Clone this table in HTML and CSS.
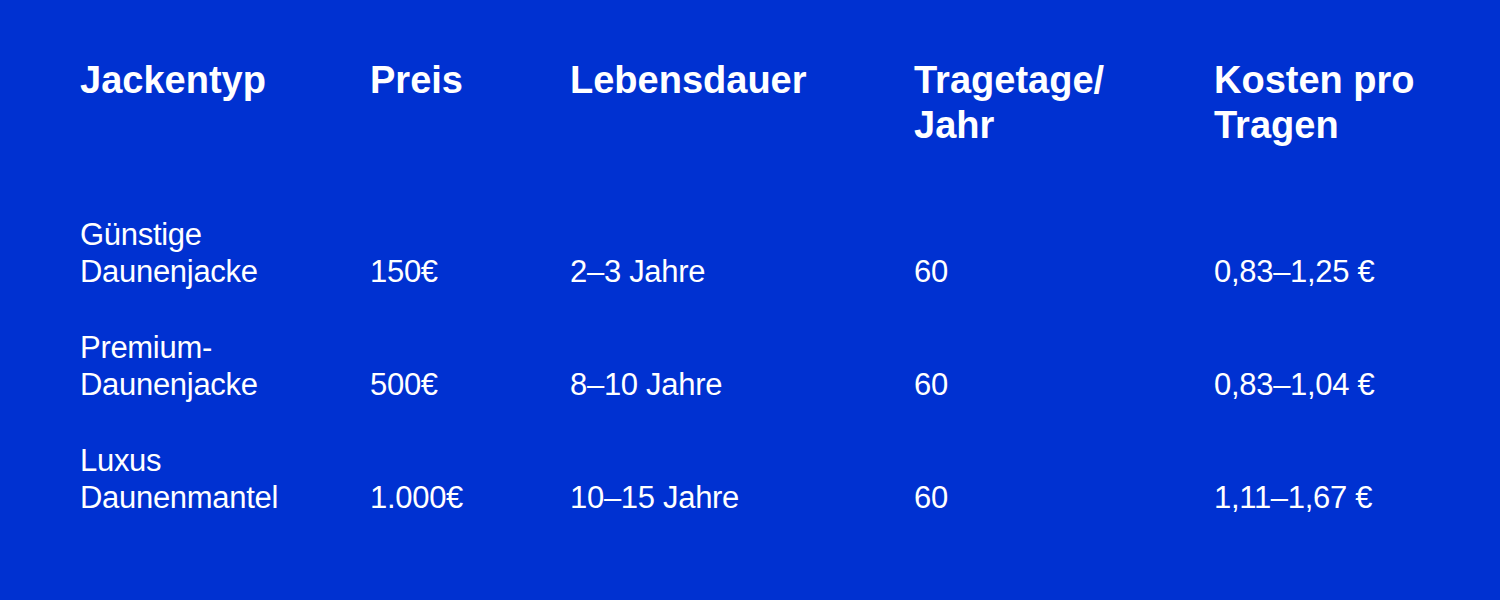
FILE: index.html
```html
<!DOCTYPE html>
<html lang="de">
<head>
<meta charset="utf-8">
<title>Kosten pro Tragen</title>
<link rel="stylesheet" href="styles.css">
</head>
<body>
<div class="table">
  <div class="row head">
    <div class="cell">Jackentyp</div>
    <div class="cell">Preis</div>
    <div class="cell">Lebensdauer</div>
    <div class="cell">Tragetage/<br>Jahr</div>
    <div class="cell">Kosten pro<br>Tragen</div>
  </div>
  <div class="row">
    <div class="cell">Günstige<br>Daunenjacke</div>
    <div class="cell">150€</div>
    <div class="cell">2–3 Jahre</div>
    <div class="cell">60</div>
    <div class="cell">0,83–1,25 €</div>
  </div>
  <div class="row">
    <div class="cell">Premium-<br>Daunenjacke</div>
    <div class="cell">500€</div>
    <div class="cell">8–10 Jahre</div>
    <div class="cell">60</div>
    <div class="cell">0,83–1,04 €</div>
  </div>
  <div class="row">
    <div class="cell">Luxus<br>Daunenmantel</div>
    <div class="cell">1.000€</div>
    <div class="cell">10–15 Jahre</div>
    <div class="cell">60</div>
    <div class="cell">1,11–1,67 €</div>
  </div>
</div>
</body>
</html>
```
FILE: styles.css
```css
html, body {
  margin: 0;
  padding: 0;
  background: #0031d1;
}
body {
  width: 1500px;
  height: 600px;
  overflow: hidden;
  color: #ffffff;
  font-family: "Liberation Sans", Arial, sans-serif;
}
.table {
  display: flex;
  flex-direction: column;
  gap: 39px;
  padding: 58px 0 0 80px;
}
.row {
  display: grid;
  grid-template-columns: 290px 200px 344px 300px 1fr;
  align-items: end;
  font-size: 31px;
  line-height: 37px;
  letter-spacing: -0.3px;
}
.row.head {
  align-items: start;
  font-size: 38px;
  line-height: 45px;
  font-weight: 700;
  letter-spacing: 0;
  margin-bottom: 29px;
}
```
